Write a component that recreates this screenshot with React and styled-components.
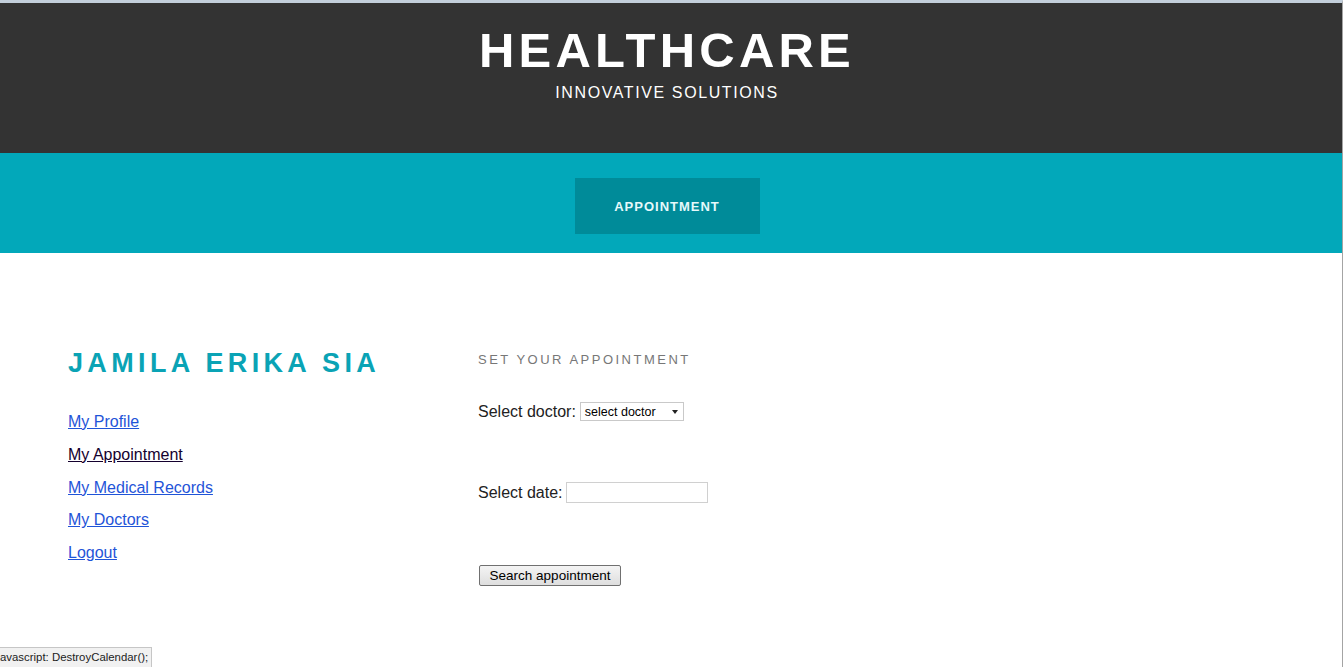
import React from "react";
import styled, { createGlobalStyle } from "styled-components";

const GlobalStyle = createGlobalStyle`
  html, body {
    margin: 0;
    padding: 0;
    background: #ffffff;
    font-family: "Liberation Sans", Arial, sans-serif;
  }
`;

const Page = styled.div`
  width: 1342px;
  min-height: 664px;
  border-top: 3px solid #c3cfdb;
  border-right: 1px solid #a4a4a4;
  background: #ffffff;
`;

const Header = styled.header`
  height: 150px;
  padding-right: 8px;
  background-color: #333333;
  display: flex;
  flex-direction: column;
  align-items: center;
  color: #ffffff;
`;

const Title = styled.h1`
  margin: 22px 0 0 0;
  font-size: 49px;
  font-weight: bold;
  letter-spacing: 4.2px;
  line-height: 50px;
`;

const Subtitle = styled.div`
  margin-top: 9px;
  font-size: 16px;
  letter-spacing: 1.6px;
`;

const NavBand = styled.nav`
  height: 100px;
  padding-right: 8px;
  background-color: #02a8ba;
  display: flex;
  justify-content: center;
  align-items: flex-start;
`;

const NavButton = styled.a`
  margin-top: 25px;
  width: 185px;
  height: 56px;
  background-color: #008b99;
  color: #e6f9fb;
  font-size: 13px;
  font-weight: bold;
  letter-spacing: 1px;
  display: flex;
  justify-content: center;
  align-items: center;
  text-decoration: none;
`;

const Main = styled.main`
  display: flex;
  padding: 95px 0 0 68px;
`;

const Sidebar = styled.aside`
  width: 410px;
`;

const Name = styled.h2`
  margin: 0;
  color: #0aa3b5;
  font-size: 27px;
  font-weight: bold;
  letter-spacing: 4.35px;
  line-height: 30px;
`;

const LinkList = styled.ul`
  list-style: none;
  margin: 34px 0 0;
  padding: 0;
  display: flex;
  flex-direction: column;
  gap: 13.75px;
`;

const SideLink = styled.a`
  font-size: 16px;
  line-height: 19px;
  color: ${(p) => (p.$active ? "#14002e" : "#1f54d8")};
  text-decoration: underline;
`;

const Content = styled.section`
  display: flex;
  flex-direction: column;
  align-items: flex-start;
`;

const SectionTitle = styled.h3`
  margin: 4px 0 0;
  font-size: 13px;
  font-weight: normal;
  color: #777777;
  letter-spacing: 2.5px;
  line-height: 16px;
`;

const Field = styled.label`
  display: flex;
  align-items: center;
  gap: ${(p) => p.$gap}px;
  font-size: 16px;
  color: #222222;
  margin-top: ${(p) => p.$top}px;
`;

const SelectBox = styled.div`
  width: 104px;
  height: 19px;
  box-sizing: border-box;
  border: 1px solid #c9c9c9;
  background: #ffffff;
  font-size: 12.5px;
  color: #000;
  display: flex;
  align-items: center;
  justify-content: space-between;
  padding: 0 5px 0 4px;
`;

const Caret = styled.span`
  width: 0;
  height: 0;
  border-left: 3.5px solid transparent;
  border-right: 3.5px solid transparent;
  border-top: 4px solid #222;
`;

const DateInput = styled.div`
  width: 142px;
  height: 21px;
  box-sizing: border-box;
  border: 1px solid #d0d0d0;
  background: #fff;
`;

const SearchButton = styled.button`
  margin-top: 62px;
  margin-left: 1px;
  width: 142px;
  height: 21px;
  padding: 0;
  font-family: "Liberation Sans", Arial, sans-serif;
  font-size: 13.5px;
  color: #000;
  border: 1px solid #707070;
  border-radius: 2px;
  background: linear-gradient(#f4f4f4, #dedede);
`;

const StatusTip = styled.div`
  position: fixed;
  left: 0;
  bottom: 0;
  height: 19px;
  padding: 0 3px 0 0;
  background: #f1f1f1;
  border: 1px solid #c6c6c6;
  border-left: none;
  border-bottom: none;
  font-family: "Liberation Sans", Arial, sans-serif;
  font-size: 11.4px;
  line-height: 19px;
  color: #222;
`;

const links = [
  { label: "My Profile" },
  { label: "My Appointment", active: true },
  { label: "My Medical Records" },
  { label: "My Doctors" },
  { label: "Logout" },
];

export default function App() {
  return (
    <>
      <GlobalStyle />
      <Page>
        <Header>
          <Title>HEALTHCARE</Title>
          <Subtitle>INNOVATIVE SOLUTIONS</Subtitle>
        </Header>
        <NavBand>
          <NavButton href="#">APPOINTMENT</NavButton>
        </NavBand>
        <Main>
          <Sidebar>
            <Name>JAMILA ERIKA SIA</Name>
            <LinkList>
              {links.map((l) => (
                <li key={l.label}>
                  <SideLink href="#" $active={l.active}>
                    {l.label}
                  </SideLink>
                </li>
              ))}
            </LinkList>
          </Sidebar>
          <Content>
            <SectionTitle>SET YOUR APPOINTMENT</SectionTitle>
            <Field $top={34} $gap={4}>
              Select doctor:
              <SelectBox>
                select doctor
                <Caret />
              </SelectBox>
            </Field>
            <Field $top={61} $gap={3}>
              Select date:
              <DateInput />
            </Field>
            <SearchButton type="button">Search appointment</SearchButton>
          </Content>
        </Main>
        <StatusTip>avascript: DestroyCalendar();</StatusTip>
      </Page>
    </>
  );
}
